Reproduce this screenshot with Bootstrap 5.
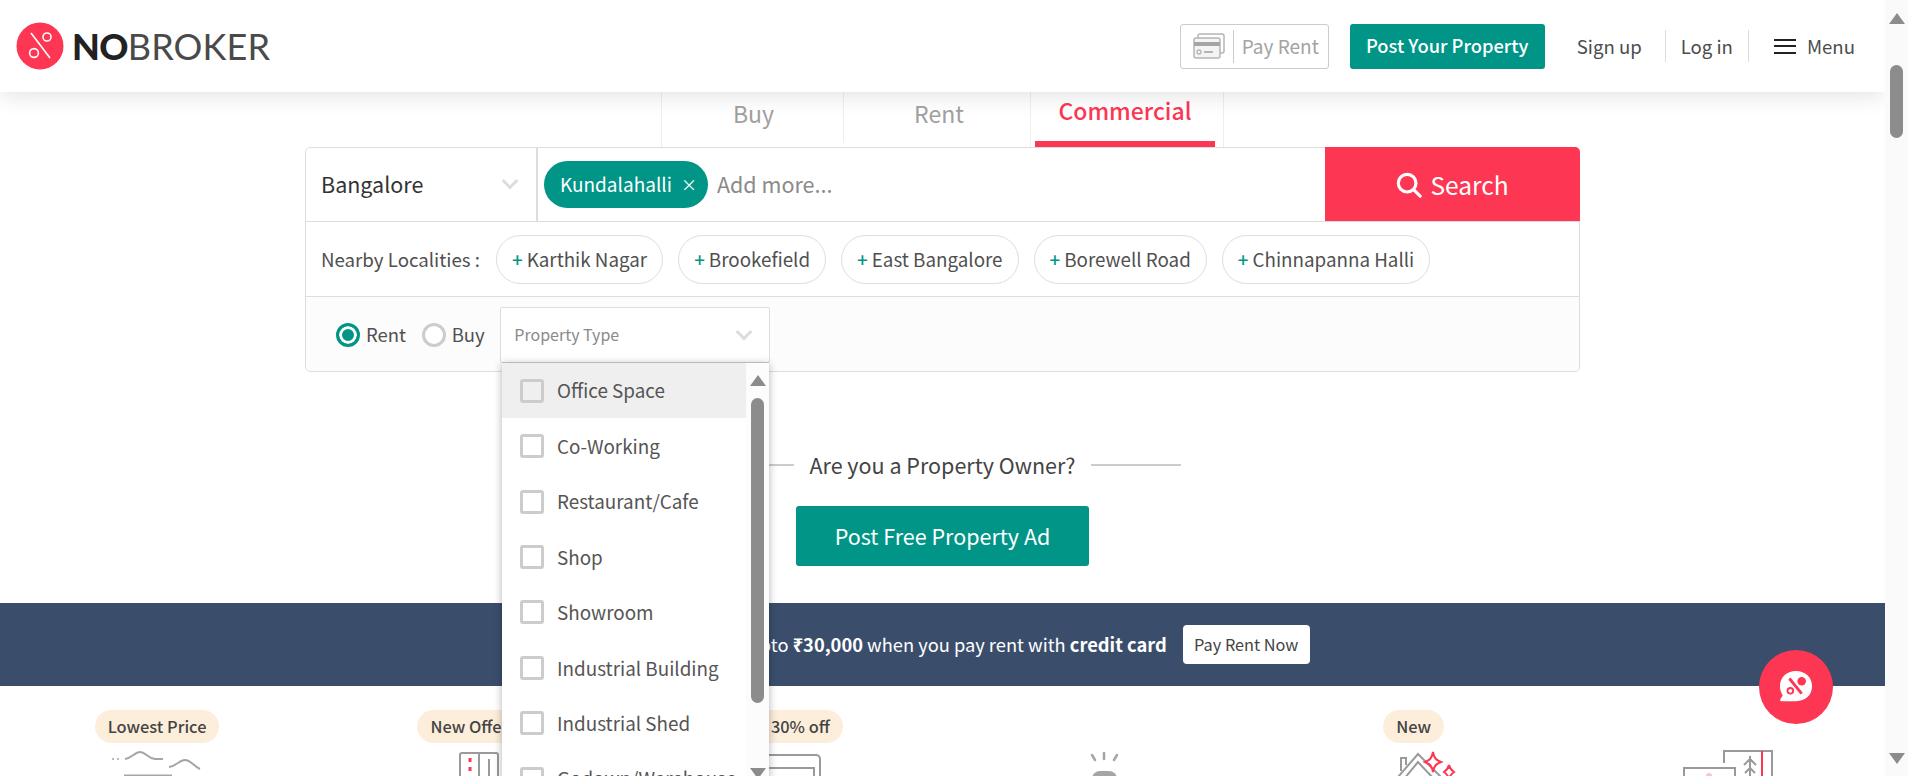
<!DOCTYPE html>
<html lang="en">
<head>
    <meta charset="UTF-8">
    <meta name="viewport" content="width=device-width, initial-scale=1.0">
    <title>NoBroker</title>
    <link href="https://cdn.jsdelivr.net/npm/bootstrap@5.3.0/dist/css/bootstrap.min.css" rel="stylesheet">
    <style>
        html, body {
            height: 776px;
            overflow: hidden;
        }
        body {
            font-family: "Noto Sans CJK SC", "Noto Sans", sans-serif;
            line-height: 1.2;
            color: #464646;
            background: #fff;
        }
        .page-wrap { width: 1885px; height: 776px; overflow: hidden; flex: none; }

        /* page scrollbar */
        .page-sb { width: 23px; height: 776px; background: #fafafa; flex: none; padding-top: 13px; }
        .sb-up { width: 0; height: 0; border-left: 8px solid transparent; border-right: 8px solid transparent; border-bottom: 11px solid #8c8c8c; }
        .sb-down { width: 0; height: 0; border-left: 8px solid transparent; border-right: 8px solid transparent; border-top: 11px solid #8c8c8c; }
        .sb-thumb { background: #8c8c8c; border-radius: 7px; width: 13px; }
        .page-sb .sb-thumb { height: 73px; margin: 41px 0 0 5px; }
        .page-sb .sb-up { margin-left: 4px; }
        .page-sb .sb-down { margin: 615px 0 0 4px; }

        /* header */
        .top-bar { height: 92px; padding: 0 30px 0 16px; box-shadow: 0 3px 22px rgba(0,0,0,.12); position: relative; z-index: 3; }
        .logo-text { font-family: Lato, sans-serif; font-size: 36px; margin-left: 8px; letter-spacing: .1px; color: #4a4a4a; font-weight: 400; line-height: 1; }
        .logo-text b { font-weight: 900; color: #222; letter-spacing: -.6px; }
        .pay-btn { width: 149px; height: 45px; border: 1px solid #ccc; border-radius: 3px; padding: 0 0 0 12px; color: #a3a3a3; font-size: 19px; }
        .pay-sep { width: 1px; height: 33px; background: #ccc; margin: 0 8px; }
        .btn-teal { background: #009587; color: #fff; border: 0; border-radius: 3px; }
        .btn-teal:hover { background: #009587; color: #fff; }
        .post-btn { width: 195px; height: 45px; margin-left: 21px; font-size: 18.3px; padding: 0; font-weight: 500; }
        .top-link { font-size: 18.6px; color: #4c4c4c; height: 32px; line-height: 32px; }
        .top-link.with-sep { border-right: 1px solid #ddd; }
        .link-signup { margin-left: 32px; padding-right: 23px; }
        .link-login { padding-left: 15px; padding-right: 15px; }
        .link-menu { padding-left: 25px; }
        .burger { width: 22px; height: 15px; border-top: 2px solid #222; border-bottom: 2px solid #222; position: relative; margin-right: 11px; }
        .burger::after { content: ""; position: absolute; left: 0; right: 0; top: 4.5px; height: 2px; background: #222; }

        /* tabs */
        .tab-row { height: 55px; }
        .tab-cell { font-size: 23px; color: #a0a0a0; text-align: center; border-left: 1px solid #eee; padding-top: 8px; }
        .tab-buy { width: 182px; padding-left: 2px; }
        .tab-rent { width: 187px; height: 51px; padding-left: 4px; }
        .tab-comm { width: 194px; color: #fd3753; border-right: 1px solid #eee; padding: 5px 8px 0 4px; font-weight: 500; }
        .tab-comm span { display: block; height: 50px; border-bottom: 6px solid #fd3753; }

        /* search box */
        .search-box { width: 1275px; height: 225px; margin-left: 305px; border: 1px solid #ddd; border-radius: 5px; position: relative; }
        .row-one { height: 74px; border-bottom: 1px solid #ddd; }
        .city-cell { width: 232px; height: 100%; border-right: 2px solid #ddd; padding: 0 20px 2px 15px; font-size: 21.5px; color: #333; }
        .chev { width: 12px; height: 12px; border-right: 3px solid #ddd; border-bottom: 3px solid #ddd; transform: rotate(45deg); margin-top: -6px; }
        .loc-tag { height: 47px; background: #009587; color: #fff; font-size: 19px; padding: 0 11px 0 16px; margin-left: 6px; margin-right: 9px; }
        .loc-x { font-size: 16px; margin-left: 9px; }
        .add-more { font-size: 21.5px; color: #8a8a8a; padding-bottom: 2px; }
        .search-btn { width: 255px; height: 74px; margin-top: -1px; margin-right: -1px; background: #fd3753; color: #fff; font-size: 24.5px; border-radius: 0 5px 0 0; padding: 2px 0 0; border: 0; }
        .search-btn:hover { background: #fd3753; color: #fff; }
        .row-two { height: 75px; border-bottom: 1px solid #ddd; padding-left: 15px; font-size: 18.7px; }
        .near-label { margin-right: 16px; color: #505050; }
        .near-pill { height: 49px; border: 1px solid #ddd; padding: 0 15px; margin-right: 15px; color: #505050; font-size: 18.8px; }
        .near-pill i { font-style: normal; color: #009587; margin-right: 4px; font-weight: 500; }
        .row-three { height: 74px; background: #fcfcfc; padding: 1px 0 0 30px; border-radius: 0 0 5px 5px; position: relative; }
        .radio-in.form-check-input { width: 24px; height: 24px; margin: 0 6px 0 0; border: 3px solid #ccc; background: #fff; flex: none; }
        .radio-in.form-check-input:checked { border-color: #009587; background: #009587; background-image: none; box-shadow: inset 0 0 0 3px #fff; }
        .radio-txt { font-size: 18.5px; color: #505050; margin-right: 15.6px; }
        .type-box { width: 270px; height: 56px; background: #fff; border: 1px solid #ddd; border-radius: 2px; margin-left: 0; padding: 0 19px 0 13px; font-size: 16px; color: #8a8a8a; }

        /* property type menu */
        .type-menu { position: absolute; left: 196px; top: 214px; width: 267px; height: 420px; background: #fff; box-shadow: 0 2px 8px rgba(0,0,0,.3); border-top: 1px solid #bbb; overflow: hidden; z-index: 2; }
        .type-list { width: 244px; flex: none; }
        .type-item { height: 55.45px; padding-left: 18px; font-size: 18.85px; color: #555; }
        .type-item.hovered { background: #efefef; }
        .type-item .form-check-input { width: 24px; height: 24px; margin: 0 13px 0 0; border: 3px solid #ccc; border-radius: 3px; background-color: transparent; flex: none; }
        .type-sb { width: 23px; background: #fcfcfc; padding: 12px 0 0 4px; }
        .type-sb .sb-thumb { height: 305px; margin: 12px 0 0 1px; }
        .type-sb .sb-down { margin-top: 65px; }

        /* owner block */
        .owner-block { padding-top: 80px; height: 231px; }
        .owner-line { width: 90px; flex: none; }
        .owner-line-bar { height: 2px; background: #ccc; flex: 1; }
        .owner-q { font-size: 21.5px; color: #444; margin: 0 15px; white-space: nowrap; }
        .owner-btn { width: 293px; height: 60px; font-size: 21.5px; margin-top: 28px; padding: 0; font-weight: 400; }

        /* banner */
        .rent-banner { height: 83px; background: #3a4e6c; color: #fff; font-size: 18.3px; }
        .rent-banner .btn { height: 39px; width: 127px; margin-left: 16px; background: #fff; color: #444; font-size: 16.3px; padding: 0; border-radius: 4px; border: 0; }

        /* feature strip */
        .feature-strip { padding-top: 24px; }
        .feature-col { width: 314.16px; flex: none; }
        .feature-slot { height: 33px; }
        .feature-pill { height: 33px; background: #fdeedb; padding: 0 13px; font-size: 16.4px; font-weight: 500; color: #444; }
        .pill-shifted { margin-right: 12px; }
        .pill-nudged { margin-left: 4px; }
        .feature-col svg { margin-top: 6px; display: block; }

        .chat-fab { position: fixed; left: 1759px; top: 650px; width: 74px; height: 74px; background: #fd3753; z-index: 5; }
    </style>
</head>
<body class="d-flex">
    <div class="page-wrap">
        <!-- Header -->
        <div class="top-bar d-flex align-items-center bg-white">
            <svg width="48" height="48" viewBox="0 0 48 48">
                <circle cx="24" cy="24" r="23.5" fill="#fd3753"/>
                <path d="M15 11 L34 36" stroke="#fff" stroke-width="1.6"/>
                <circle cx="31" cy="15" r="4" fill="none" stroke="#fff" stroke-width="1.6"/>
                <circle cx="18" cy="31" r="4.4" fill="none" stroke="#fff" stroke-width="1.6"/>
            </svg>
            <div class="logo-text"><b>NO</b>BROKER</div>
            <div class="ms-auto d-flex align-items-center">
                <div class="pay-btn d-flex align-items-center">
                    <svg width="32" height="26" viewBox="0 0 32 26">
                        <rect x="5" y="1" width="26" height="19" rx="2" fill="#fff" stroke="#b5b5b5" stroke-width="1.5"/>
                        <rect x="1" y="5" width="26" height="20" rx="2" fill="#f4f4f4" stroke="#b5b5b5" stroke-width="1.5"/>
                        <rect x="1" y="9" width="26" height="4" fill="#a5a5a5"/>
                        <circle cx="6" cy="19" r="2" fill="none" stroke="#b5b5b5" stroke-width="1.3"/>
                        <path d="M11 19 H20" stroke="#b5b5b5" stroke-width="2"/>
                    </svg>
                    <span class="pay-sep"></span>
                    <span>Pay Rent</span>
                </div>
                <button class="btn btn-teal post-btn">Post Your Property</button>
                <div class="top-link with-sep link-signup">Sign up</div>
                <div class="top-link with-sep link-login">Log in</div>
                <div class="top-link link-menu d-flex align-items-center"><span class="burger"></span>Menu</div>
            </div>
        </div>

        <!-- Tabs -->
        <div class="tab-row d-flex justify-content-center">
            <div class="tab-cell tab-buy">Buy</div>
            <div class="tab-cell tab-rent">Rent</div>
            <div class="tab-cell tab-comm"><span>Commercial</span></div>
        </div>

        <!-- Search -->
        <div class="search-box">
            <div class="row-one d-flex align-items-center">
                <div class="city-cell d-flex align-items-center justify-content-between">
                    <span>Bangalore</span><span class="chev"></span>
                </div>
                <div class="loc-tag rounded-pill d-flex align-items-center">Kundalahalli<span class="loc-x">×</span></div>
                <div class="add-more">Add more...</div>
                <button class="btn search-btn ms-auto d-flex align-items-center justify-content-center">
                    <svg width="26" height="26" viewBox="0 0 28 28" class="me-2" fill="none" stroke="#fff" stroke-width="3.4">
                        <circle cx="12" cy="12" r="9.5"/>
                        <path d="M19 19 L26 26" stroke-linecap="round"/>
                    </svg>
                    Search
                </button>
            </div>
            <div class="row-two d-flex align-items-center">
                <span class="near-label">Nearby Localities :</span>
                <span class="near-pill rounded-pill d-flex align-items-center"><i>+</i>Karthik Nagar</span>
                <span class="near-pill rounded-pill d-flex align-items-center"><i>+</i>Brookefield</span>
                <span class="near-pill rounded-pill d-flex align-items-center"><i>+</i>East Bangalore</span>
                <span class="near-pill rounded-pill d-flex align-items-center"><i>+</i>Borewell Road</span>
                <span class="near-pill rounded-pill d-flex align-items-center"><i>+</i>Chinnapanna Halli</span>
            </div>
            <div class="row-three d-flex align-items-center">
                <input class="form-check-input radio-in" type="radio" name="deal" checked>
                <span class="radio-txt">Rent</span>
                <input class="form-check-input radio-in" type="radio" name="deal">
                <span class="radio-txt">Buy</span>
                <div class="type-box d-flex align-items-center justify-content-between">
                    <span>Property Type</span><span class="chev"></span>
                </div>
            </div>
            <div class="type-menu d-flex">
                <div class="type-list">
                    <div class="type-item hovered d-flex align-items-center"><input class="form-check-input" type="checkbox">Office Space</div>
                    <div class="type-item d-flex align-items-center"><input class="form-check-input" type="checkbox">Co-Working</div>
                    <div class="type-item d-flex align-items-center"><input class="form-check-input" type="checkbox">Restaurant/Cafe</div>
                    <div class="type-item d-flex align-items-center"><input class="form-check-input" type="checkbox">Shop</div>
                    <div class="type-item d-flex align-items-center"><input class="form-check-input" type="checkbox">Showroom</div>
                    <div class="type-item d-flex align-items-center"><input class="form-check-input" type="checkbox">Industrial Building</div>
                    <div class="type-item d-flex align-items-center"><input class="form-check-input" type="checkbox">Industrial Shed</div>
                    <div class="type-item d-flex align-items-center"><input class="form-check-input" type="checkbox">Godown/Warehouse</div>
                </div>
                <div class="type-sb">
                    <div class="sb-up"></div>
                    <div class="sb-thumb"></div>
                    <div class="sb-down"></div>
                </div>
            </div>
        </div>

        <!-- Owner -->
        <div class="owner-block d-flex flex-column align-items-center">
            <div class="d-flex align-items-center">
                <div class="owner-line d-flex"><div class="owner-line-bar"></div></div>
                <div class="owner-q">Are you a Property Owner?</div>
                <div class="owner-line d-flex"><div class="owner-line-bar"></div></div>
            </div>
            <button class="btn btn-teal owner-btn">Post Free Property Ad</button>
        </div>

        <!-- Banner -->
        <div class="rent-banner d-flex align-items-center justify-content-center">
            <span class="ps-2">Earn reward points upto <b>₹30,000</b> when you pay rent with <b>credit card</b></span>
            <button class="btn">Pay Rent Now</button>
        </div>

        <!-- Features -->
        <div class="feature-strip d-flex">
            <div class="feature-col d-flex flex-column align-items-center">
                <div class="feature-slot"><span class="feature-pill rounded-pill d-inline-flex align-items-center">Lowest Price</span></div>
                <svg width="120" height="30" viewBox="0 0 120 30" fill="none" stroke="#a5a5a5" stroke-width="2">
                    <path d="M15 10 H17 M20 10 H22" stroke="#bbb"/>
                    <path d="M28 10 C35 9 38 3 43 3 C49 3 50 9 58 10 H66"/>
                    <path d="M72 18 C80 17 82 11 88 11 C94 11 96 17 103 20"/>
                    <path d="M27 27 H75" stroke-width="3"/>
                </svg>
            </div>
            <div class="feature-col d-flex flex-column align-items-center">
                <div class="feature-slot pill-nudged"><span class="feature-pill rounded-pill d-inline-flex align-items-center">New Offers</span></div>
                <svg width="120" height="30" viewBox="0 0 120 30" fill="none" stroke="#9a9a9a" stroke-width="2">
                    <rect x="49" y="4" width="38" height="40" rx="2"/>
                    <path d="M68 4 V44 M78 10 V30"/>
                    <path d="M59 9 V13 M59 18 V22" stroke="#fd3753" stroke-width="3"/>
                </svg>
            </div>
            <div class="feature-col d-flex flex-column align-items-center">
                <div class="feature-slot pill-shifted"><span class="feature-pill rounded-pill d-inline-flex align-items-center">Upto 30% off</span></div>
                <svg width="120" height="30" viewBox="0 0 120 30" fill="none" stroke="#9a9a9a" stroke-width="2">
                    <rect x="20" y="6" width="75" height="40" rx="4"/>
                    <rect x="26" y="19" width="63" height="30"/>
                </svg>
            </div>
            <div class="feature-col d-flex flex-column align-items-center">
                <div class="feature-slot"></div>
                <svg width="120" height="30" viewBox="0 0 120 30" fill="none" stroke="#a5a5a5" stroke-width="2.5" stroke-linecap="round">
                    <path d="M64 4 V10 M52 6 L55 11 M77 6 L74 11"/>
                    <rect x="52" y="22" width="25" height="20" rx="8" fill="#a5a5a5" stroke="none"/>
                </svg>
            </div>
            <div class="feature-col d-flex flex-column align-items-center">
                <div class="feature-slot"><span class="feature-pill rounded-pill d-inline-flex align-items-center">New</span></div>
                <svg width="120" height="30" viewBox="0 0 120 30" fill="none" stroke="#9a9a9a" stroke-width="2">
                    <path d="M44 28 L64 5 L89 30"/>
                    <path d="M50 30 L64 13 L80 30"/>
                    <path d="M47 22 V9 H52 V16"/>
                    <path d="M79 3 C80 9 82 11 87 13 C82 15 80 17 79 23 C78 17 76 15 71 13 C76 11 78 9 79 3 Z" stroke="#fd3753" fill="#fff"/>
                    <path d="M95 16 C96 20 97 21 100 23 C97 25 96 26 95 30 C94 26 93 25 90 23 C93 21 94 20 95 16 Z" stroke="#fd3753" fill="#fff"/>
                </svg>
            </div>
            <div class="feature-col d-flex flex-column align-items-center">
                <div class="feature-slot"></div>
                <svg width="120" height="30" viewBox="0 0 120 30" fill="none" stroke="#9a9a9a" stroke-width="2">
                    <path d="M56 14 V2 H104 V30"/>
                    <path d="M94 2 V30" stroke="#fd3753"/>
                    <path d="M82 7 V28 M76 16 L82 10 L88 16 M77 24 L82 19 L87 24"/>
                    <path d="M16 30 V19 H67 V30"/>
                    <circle cx="41" cy="27" r="3" fill="#fbc4cc" stroke="none"/>
                </svg>
            </div>
        </div>
    </div>

    <!-- Fake page scrollbar -->
    <div class="page-sb">
        <div class="sb-up"></div>
        <div class="sb-thumb"></div>
        <div class="sb-down"></div>
    </div>

    <!-- Chat button -->
    <div class="chat-fab rounded-circle d-flex align-items-center justify-content-center">
        <svg width="34" height="34" viewBox="0 0 36 36">
            <path d="M18 1 C28 1 35 8 35 17 C35 27 28 33 18 33 H3 Q0 33 2 30 L4 27 C2 24 1 21 1 17 C1 8 8 1 18 1 Z" fill="#fff"/>
            <path d="M11 9 L24 25" stroke="#fd3753" stroke-width="3"/>
            <circle cx="24" cy="12" r="4.5" fill="#fd3753"/>
            <circle cx="12" cy="22" r="3" fill="none" stroke="#fd3753" stroke-width="2"/>
        </svg>
    </div>
    <script src="https://cdn.jsdelivr.net/npm/bootstrap@5.3.0/dist/js/bootstrap.bundle.min.js"></script>
</body>
</html>
